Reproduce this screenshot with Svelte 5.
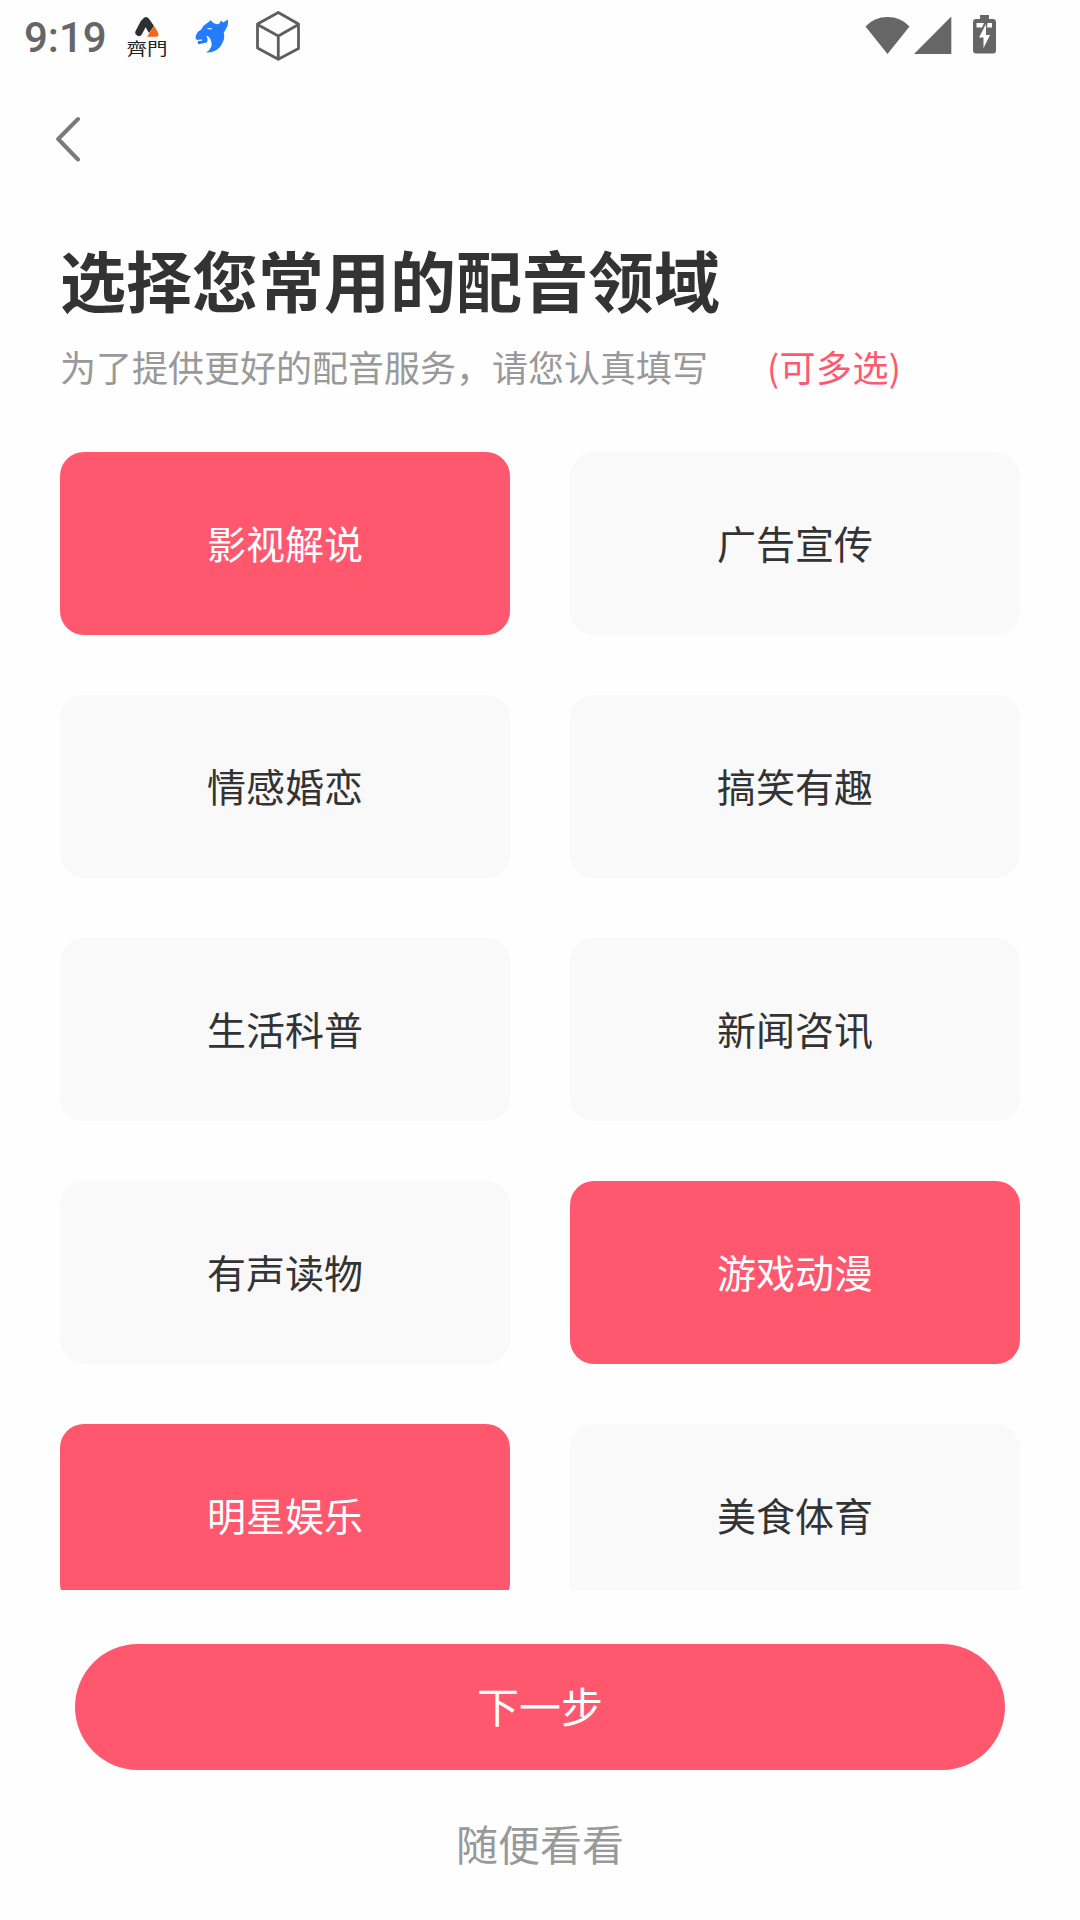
<script>
  let topics = $state([
    { name: '影视解说', on: true },
    { name: '广告宣传', on: false },
    { name: '情感婚恋', on: false },
    { name: '搞笑有趣', on: false },
    { name: '生活科普', on: false },
    { name: '新闻咨讯', on: false },
    { name: '有声读物', on: false },
    { name: '游戏动漫', on: true },
    { name: '明星娱乐', on: true },
    { name: '美食体育', on: false },
  ]);
</script>

<main class="screen">
  <div class="status">
    <span class="time">9:19</span>
    <svg class="gate" width="46" height="44" viewBox="124 14 46 44">
      <path d="M138.800 32.500L143.800 23" stroke="#2b3036" stroke-width="7" stroke-linecap="round" fill="none" />
      <path d="M143 18.500q3-3.200 5.800 0l5.200 7.500-5 7-6.500-11z" fill="#2b3036" />
      <path d="M153.800 25.800q4.500 6 4.700 9 0 1.900-2 1.900h-9.300z" fill="#f8641a" />
      <text class="gate-text" textLength="41" transform="translate(126.500 54.800) scale(1 0.85)">齊門</text>
    </svg>
    <svg class="horse" width="36" height="40" viewBox="194 16 36 40">
      <path d="M228 19.500q.500 6-2 9.200l-2.300 4.300q1.500 4.500-1 9.300Q219 52.500 206 52.700q8-5 4.700-13-2-4-4.500-4 2.500 3.500.500 6.800l-8.200 1.700q-1.500-1.500-.500-3l-2.300-2.700q-.500-6 5.300-8.800 2.500-4.700 6.300-6.700l3.500-2.700 2.500 2.700q4 2 6.200.500l1.500-3 2 2z" fill="#237dfa" />
      <path d="M196.500 40.500l5.500-.300M207.500 28.500l4.500.500" stroke="#fff" stroke-width="1.200" fill="none" />
    </svg>
    <svg class="cube" width="48" height="54" viewBox="254 9 48 54">
      <path d="M278.300 12.500L298.500 24v24.500L278.300 59.300 257.500 48V24zM257.500 24.500l20.800 11.500 20.200-11.500M278.300 36v23" fill="none" stroke="#5e5e5e" stroke-width="2.800" stroke-linejoin="round" />
    </svg>
    <svg class="signals" width="136" height="44" viewBox="864 12 136 44">
      <g fill="#666">
        <path d="M865.500 26.500Q874 17 887.500 17T909.500 26.500L887.500 54z" />
        <path d="M914 54L951.300 16.500V54z" />
        <path fill-rule="evenodd" d="M980 15h9v4h4q3 0 3 3v28.500q0 3-3 3h-17q-3 0-3-3V22q0-3 3-3h4zM976.500 23v4.500h5.500l2-4.500zM987.500 23l-.500 4.500h5V23zM986 24l-7 13.500h4.500v10.500l6.500-13h-4z" />
      </g>
    </svg>
  </div>

  <button class="back" aria-label="返回">
    <svg width="26" height="46" viewBox="0 0 26 46">
      <path d="M23 3L3.200 23 23 43.500" fill="none" stroke="#7a7a7a" stroke-width="4" stroke-linecap="round" stroke-linejoin="round" />
    </svg>
  </button>

  <h1>选择您常用的配音领域</h1>
  <p class="hint"><span>为了提供更好的配音服务，请您认真填写</span><span class="multi">(可多选)</span></p>

  <div class="topics">
    {#each topics as topic}
      <button class="topic" class:on={topic.on} onclick={() => (topic.on = !topic.on)}>{topic.name}</button>
    {/each}
  </div>

  <button class="next">下一步</button>
  <button class="skip">随便看看</button>
</main>

<style>
  :global(body) {
    background: #fff;
  }
  .screen {
    width: 1080px;
    height: 1920px;
    box-sizing: border-box;
    display: flex;
    flex-direction: column;
    overflow: hidden;
    background: #fefefe;
    font-family: 'Noto Sans CJK SC', sans-serif;
    color: #333;
  }
  button {
    border: 0;
    margin: 0;
    padding: 0;
    background: none;
    font: inherit;
    color: inherit;
  }
  svg {
    display: block;
    flex: none;
  }
  .status {
    display: flex;
    align-items: center;
    height: 72px;
    padding-left: 24px;
  }
  .time {
    width: 100px;
    font: 500 42px/50px Roboto, sans-serif;
    color: #666;
    padding-top: 4px;
  }
  .gate-text {
    font: 400 20.5px 'Noto Sans CJK TC', sans-serif;
    fill: #222;
  }
  .horse {
    margin-left: 24px;
  }
  .cube {
    margin-left: 24px;
  }
  .signals {
    margin-left: 562px;
    margin-bottom: 4px;
  }
  .back {
    width: 26px;
    height: 46px;
    margin: 44px 0 0 55px;
  }
  h1 {
    margin: 76px 60px 0;
    font-size: 66px;
    line-height: 80px;
    font-weight: 700;
  }
  .hint {
    display: flex;
    gap: 59px;
    margin: 23px 60px 0;
    font-size: 36px;
    line-height: 50px;
    color: #999;
  }
  .multi {
    color: #ff576e;
    letter-spacing: 0.4px;
  }
  .topics {
    display: grid;
    grid-template-columns: 450px 450px;
    grid-auto-rows: 183px;
    gap: 60px;
    height: 1138px;
    margin: 61px 60px 0;
    overflow: hidden;
    flex: none;
  }
  .topic {
    border-radius: 24px;
    background: #f9f9f9;
    font-size: 39px;
    line-height: 56px;
    padding-bottom: 3px;
  }
  .topic.on {
    background: #ff576e;
    color: #fff;
  }
  .next {
    flex: none;
    width: 930px;
    height: 126px;
    margin: 54px 75px 0;
    padding-bottom: 5px;
    border-radius: 63px;
    background: #ff576e;
    color: #fff;
    font-size: 42px;
  }
  .skip {
    align-self: center;
    margin-top: 43px;
    font-size: 42px;
    line-height: 60px;
    color: #999;
  }
</style>
